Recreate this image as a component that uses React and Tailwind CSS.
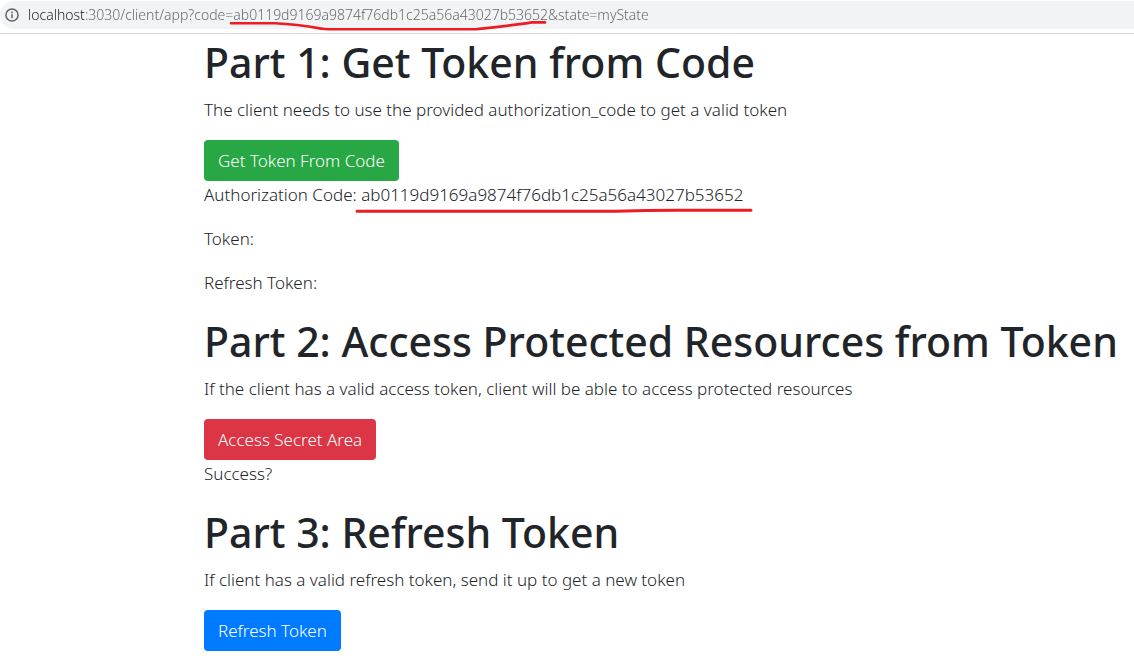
import React from "react";

function Section({ title, children }) {
  return (
    <section>
      <h1 className="mb-1.5 whitespace-nowrap text-[41px] font-medium leading-[56px]">{title}</h1>
      {children}
    </section>
  );
}

function Paragraph({ children }) {
  return <p className="mb-4">{children}</p>;
}

function ActionButton({ tone, children }) {
  const tones = {
    success: "bg-[#28a745]",
    danger: "bg-[#dc3545]",
    primary: "bg-[#007bff]",
  };
  return (
    <button type="button" className={`block h-[41px] rounded px-3.5 text-white ${tones[tone]}`}>
      {children}
    </button>
  );
}

function AddressBar() {
  return (
    <header className="h-[34px] border-b border-[#d9dadc] pt-px">
      <div className="flex h-7 items-center gap-2 rounded-l-full bg-[#f1f3f4] pl-1">
        <svg className="size-4 shrink-0" viewBox="0 0 16 16" fill="none" stroke="#5f6368" strokeWidth="1.5" aria-hidden="true">
          <circle cx="8" cy="8" r="6.1" />
          <path d="M8 7.2v4M8 4.6v1.6" />
        </svg>
        <div className="relative min-w-0 flex-1">
          <input
            type="text"
            aria-label="Address"
            defaultValue="localhost:3030/client/app?code=ab0119d9169a9874f76db1c25a56a43027b53652&state=myState"
            className="block h-7 w-full bg-[linear-gradient(90deg,#202124_57px,#5f6368_57px)] bg-clip-text text-[14px] font-light leading-7 text-transparent outline-none"
          />
          <svg
            className="pointer-events-none absolute left-[200px] top-5 h-3 w-[320px]"
            viewBox="0 0 320 12"
            fill="none"
            stroke="#ed1c24"
            strokeWidth="2.6"
            strokeLinecap="round"
            strokeLinejoin="round"
            aria-hidden="true"
          >
            <path d="M3 2.3H47C62 3 78 5 93 7.6Q96 8.3 101 8.3H248C264 6.5 288 4 304 1.4H317" />
          </svg>
        </div>
      </div>
    </header>
  );
}

export default function App() {
  return (
    <div className="bg-white font-['Noto_Sans','Open_Sans',sans-serif] text-[17px] font-[350] leading-7 text-[#212529]">
      <AddressBar />
      <main className="pl-[204px]">
        <Section title="Part 1: Get Token from Code">
          <Paragraph>The client needs to use the provided authorization_code to get a valid token</Paragraph>
          <ActionButton tone="success">Get Token From Code</ActionButton>
          <Paragraph>
            Authorization Code:{" "}
            <span className="relative">
              ab0119d9169a9874f76db1c25a56a43027b53652
              <svg
                className="pointer-events-none absolute -left-2 top-full h-2 w-[400px]"
                viewBox="0 0 400 8"
                fill="none"
                stroke="#ed1c24"
                strokeWidth="3"
                strokeLinecap="round"
                aria-hidden="true"
              >
                <path d="M4 5.3H262C285 4.6 305 4.3 325 4.3H398" />
              </svg>
            </span>
          </Paragraph>
          <Paragraph>Token:</Paragraph>
          <Paragraph>Refresh Token:</Paragraph>
        </Section>
        <Section title="Part 2: Access Protected Resources from Token">
          <Paragraph>If the client has a valid access token, client will be able to access protected resources</Paragraph>
          <ActionButton tone="danger">Access Secret Area</ActionButton>
          <Paragraph>Success?</Paragraph>
        </Section>
        <Section title="Part 3: Refresh Token">
          <Paragraph>If client has a valid refresh token, send it up to get a new token</Paragraph>
          <ActionButton tone="primary">Refresh Token</ActionButton>
        </Section>
      </main>
    </div>
  );
}
